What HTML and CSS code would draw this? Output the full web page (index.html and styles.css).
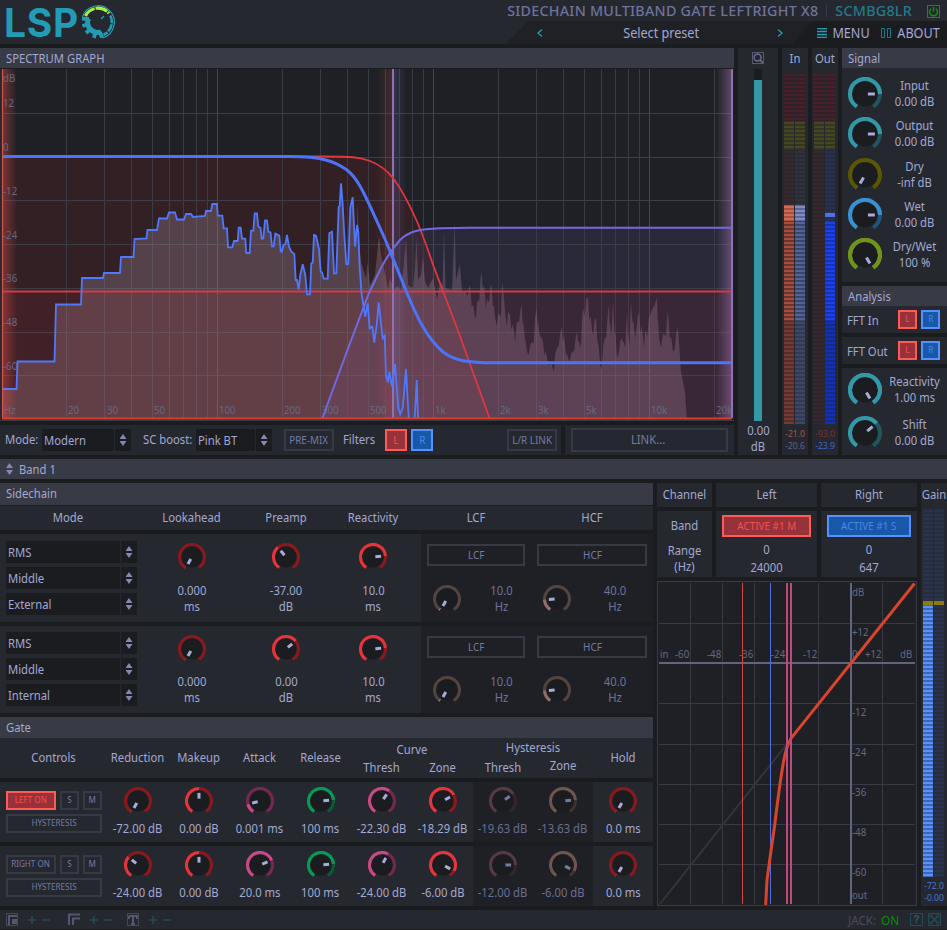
FILE: index.html
```html
<!DOCTYPE html>
<html lang="en">
<head>
<meta charset="utf-8">
<title>Sidechain Multiband Gate LeftRight x8</title>
<link rel="stylesheet" href="styles.css">
</head>
<body>
<div class="app">
<header class="top">
  <div class="logo"><span class="logo-text">LSP</span>
    <svg class="gear" width="36" height="36" viewBox="-18 -18 36 36" fill="none">
      <path d="M-15.6-5A16.4 16.4 0 1 1 5 15.8L3.5 12" stroke="#249bb5" stroke-width="1.2"/>
      <path d="M12.3-6.5A14 14 0 0 1 5.5 12.8" stroke="#249bb5" stroke-width="2.6" stroke-dasharray="8 1"/>
      <path d="M-12.5-6A14 14 0 0 1 11-8.6" stroke="#a9f03b" stroke-width="3" stroke-dasharray="12 1"/>
      <path d="M-9.5-3.5A10 10 0 0 0 3 9.8" stroke="#249bb5" stroke-width="5"/>
      <path d="M-9-3L-16-3.4M-9.5 2L-15.5 4M-7 6.5L-12 11M-2.5 9L-4 16M2 10L4 15.500" stroke="#249bb5" stroke-width="3.8"/>
      <path d="M3-3L6-6" stroke="#249bb5" stroke-width="1.4"/>
    </svg>
  </div>
  <div class="top-right">
    <div class="title-row"><span class="t title">SIDECHAIN MULTIBAND GATE LEFTRIGHT X8</span><i class="vsep"></i><span class="t code">SCMBG8LR</span>
      <svg class="power" width="13" height="13" viewBox="0 0 13 13" fill="none" stroke="#0b9408"><rect x=".5" y=".5" width="12" height="12"/><path d="M4.200 3.500a4 4 0 1 0 4.600 0M6.500 2v4.500" stroke-width="1.500"/></svg>
    </div>
    <div class="menu-row">
      <div class="preset"><svg width="6" height="10" viewBox="0 0 6 10" fill="none" stroke="#249bb5" stroke-width="1.300"><path d="M5 1.500L1 5L5 8.500"/></svg><span class="t">Select preset</span><svg width="6" height="10" viewBox="0 0 6 10" fill="none" stroke="#249bb5" stroke-width="1.300"><path d="M1 1.500L5 5L1 8.500"/></svg></div>
      <div class="menu"><svg width="10" height="10" viewBox="0 0 10 10" stroke="#249bb5"><path d="M0 .5H10M0 9.500H10M0 3.500H10M0 6.500H10" /><path d="M0 2H10M0 5H10M0 8H10" stroke="#17616f"/></svg><span class="t">MENU</span>
      <svg class="book" width="10" height="10" viewBox="0 0 10 10" stroke="#1d7a8c" fill="none"><path d="M.5 .5H3.500V9.500H.5ZM6.500 .5H9.500V9.500H6.500Z"/></svg><span class="t about">ABOUT</span></div>
    </div>
  </div>
</header>

<main class="upper">
  <section class="left">
    <div class="head"><span class="t l">SPECTRUM GRAPH</span></div>
    <svg id="spectrum" class="spectrum" width="734" height="353" viewBox="0 68 734 353"></svg>
    <div class="bars">
      <div class="bar modes"><span class="t l lab1">Mode:</span><div class="sel s1"><span class="t l">Modern</span><i></i></div>
        <span class="t l lab2">SC boost:</span><div class="sel s2"><span class="t l">Pink BT</span><i></i></div>
        <button class="btn premix"><span class="t">PRE-MIX</span></button><span class="t l lab3">Filters</span>
        <button class="btn red sq"><span class="t">L</span></button><button class="btn blue sq"><span class="t">R</span></button>
        <button class="btn lr"><span class="t">L/R LINK</span></button></div>
      <div class="bar linkbar"><button class="btn link"><span class="t">LINK...</span></button></div>
    </div>
  </section>
  <section class="panel zoomcol">
    <svg width="12" height="12" viewBox="0 0 12 12" fill="none" stroke="#6d708c"><rect x=".5" y=".5" width="11" height="11" stroke="#555870"/><circle cx="5.500" cy="5.500" r="3.500" stroke-width="1.400"/><path d="M8 8L11 11" stroke-width="1.600"/></svg>
    <div class="track"><div></div></div>
    <span class="t">0.00</span><span class="t">dB</span>
  </section>
  <section class="panel meters"><span class="t cap">In</span>
    <div class="mt"><div class="m"><b class="m-r"></b><b class="m-y"></b><b class="m-dl" style="height:55px"></b><b class="m-lt" style="height:16px"></b><b class="m-l1" style="height:100px"></b><b class="m-l2"></b></div><div class="m"><b class="m-r"></b><b class="m-y"></b><b class="m-dr" style="height:55px"></b><b class="m-rt" style="height:16px"></b><b class="m-r1" style="height:100px"></b><b class="m-r2"></b></div></div>
    <span class="t n" style="color:#a8574d">-21.0</span><span class="t n" style="color:#5b648f">-20.6</span></section>
  <section class="panel meters"><span class="t cap">Out</span>
    <div class="mt"><div class="m"><b class="m-r"></b><b class="m-y"></b><b class="m-dd"></b></div><div class="m"><b class="m-r"></b><b class="m-y"></b><b class="m-db" style="height:63px"></b><b class="m-mk"></b><b class="m-db" style="height:4px"></b><b class="m-b1" style="height:100px"></b><b class="m-b2"></b></div></div>
    <span class="t n" style="color:#7a3230">-93.0</span><span class="t n" style="color:#4166d4">-23.9</span></section>
  <section class="signal">
    <div class="head"><span class="t l">Signal</span></div>
    <div class="panel kn">
      <div class="kr"><i class="knob" data-k="17,90,#3398a8,#20575f"></i><p><span class="t">Input</span><span class="t">0.00 dB</span></p></div>
      <div class="kr"><i class="knob" data-k="17,90,#3398a8,#20575f"></i><p><span class="t">Output</span><span class="t">0.00 dB</span></p></div>
      <div class="kr"><i class="knob" data-k="17,-145,#8f8a00,#5a5700"></i><p><span class="t">Dry</span><span class="t">-inf dB</span></p></div>
      <div class="kr"><i class="knob" data-k="17,90,#3990d2,#225478"></i><p><span class="t">Wet</span><span class="t">0.00 dB</span></p></div>
      <div class="kr"><i class="knob" data-k="17,150,#6f9418,#6f9418"></i><p><span class="t">Dry/Wet</span><span class="t">100 %</span></p></div>
    </div>
    <div class="head an"><span class="t l">Analysis</span></div>
    <div class="panel fft"><span class="t l">FFT In</span><button class="btn red q"><span class="t">L</span></button><button class="btn blue q"><span class="t">R</span></button></div>
    <div class="panel fft f2"><span class="t l">FFT Out</span><button class="btn red q"><span class="t">L</span></button><button class="btn blue q"><span class="t">R</span></button></div>
    <div class="panel kn k2">
      <div class="kr"><i class="knob" data-k="17,150,#3398a8,#3398a8"></i><p><span class="t">Reactivity</span><span class="t">1.00 ms</span></p></div>
      <div class="kr"><i class="knob" data-k="17,50,#3398a8,#20575f"></i><p><span class="t">Shift</span><span class="t">0.00 dB</span></p></div>
    </div>
  </section>
</main>

<div class="band"><i class="ud"></i><span class="t l">Band 1</span></div>

<main class="lower">
  <section class="lcol">
    <div class="head h22"><span class="t l">Sidechain</span></div>
    <div class="panel sc schead"><span class="t">Mode</span><span class="t">Lookahead</span><span class="t">Preamp</span><span class="t">Reactivity</span><span class="t">LCF</span><span class="t">HCF</span></div>
    <div class="panel sc row88">
      <div class="sels"><div class="sel"><span class="t l">RMS</span><i></i></div><div class="sel"><span class="t l">Middle</span><i></i></div><div class="sel"><span class="t l">External</span><i></i></div></div>
      <div class="kv"><i class="knob" data-k="14,-145,#e2363c,#8c181c"></i><span class="t">0.000</span><span class="t">ms</span></div>
      <div class="kv"><i class="knob" data-k="14,-40,#e2363c,#8c181c"></i><span class="t">-37.00</span><span class="t">dB</span></div>
      <div class="kv re"><i class="knob" data-k="14,85,#e2363c,#8c181c"></i><span class="t">10.0</span><span class="t">ms</span></div>
      <div class="flt"><button class="btn"><span class="t">LCF</span></button><div><i class="knob" data-k="14,-142,#9c7a76,#54443f"></i><p><span class="t">10.0</span><span class="t">Hz</span></p></div></div>
      <div class="flt h"><button class="btn"><span class="t">HCF</span></button><div><i class="knob" data-k="14,-93,#8f6d6a,#54443f"></i><p><span class="t">40.0</span><span class="t">Hz</span></p></div></div>
    </div>
    <div class="panel sc row88 r2">
      <div class="sels"><div class="sel"><span class="t l">RMS</span><i></i></div><div class="sel"><span class="t l">Middle</span><i></i></div><div class="sel"><span class="t l">Internal</span><i></i></div></div>
      <div class="kv"><i class="knob" data-k="14,-145,#e2363c,#8c181c"></i><span class="t">0.000</span><span class="t">ms</span></div>
      <div class="kv"><i class="knob" data-k="14,50,#e2363c,#8c181c"></i><span class="t">0.00</span><span class="t">dB</span></div>
      <div class="kv re"><i class="knob" data-k="14,85,#e2363c,#8c181c"></i><span class="t">10.0</span><span class="t">ms</span></div>
      <div class="flt"><button class="btn"><span class="t">LCF</span></button><div><i class="knob" data-k="14,-142,#9c7a76,#54443f"></i><p><span class="t">10.0</span><span class="t">Hz</span></p></div></div>
      <div class="flt h"><button class="btn"><span class="t">HCF</span></button><div><i class="knob" data-k="14,-93,#8f6d6a,#54443f"></i><p><span class="t">40.0</span><span class="t">Hz</span></p></div></div>
    </div>
    <div class="head gatehead"><span class="t l">Gate</span></div>
    <div class="panel gt ghead"><span class="t">Controls</span><span class="t">Reduction</span><span class="t">Makeup</span><span class="t">Attack</span><span class="t">Release</span>
      <div class="two"><span class="t">Curve</span><div><span class="t">Thresh</span><span class="t">Zone</span></div></div>
      <div class="two hy"><span class="t">Hysteresis</span><div><span class="t">Thresh</span><span class="t up">Zone</span></div></div><span class="t">Hold</span></div>
    <div class="panel gt grow">
      <div class="ctl"><div><button class="btn red on"><span class="t">LEFT ON</span></button><button class="btn"><span class="t">S</span></button><button class="btn"><span class="t">M</span></button></div><button class="btn"><span class="t">HYSTERESIS</span></button></div>
      <div class="gk"><i class="knob" data-k="14,-145,#e2363c,#8c181c"></i><span class="t">-72.00 dB</span></div>
      <div class="gk"><i class="knob" data-k="14,0,#e2363c,#8c181c"></i><span class="t">0.00 dB</span></div>
      <div class="gk"><i class="knob" data-k="14,-105,#c84a84,#782850"></i><span class="t">0.001 ms</span></div>
      <div class="gk"><i class="knob" data-k="14,85,#0a9858,#075a37"></i><span class="t">100 ms</span></div>
      <div class="gk"><i class="knob" data-k="14,35,#c84a84,#782850"></i><span class="t">-22.30 dB</span></div>
      <div class="gk"><i class="knob" data-k="14,60,#e2363c,#8c181c"></i><span class="t">-18.29 dB</span></div>
      <div class="gk dim"><i class="knob" data-k="14,55,#553a44,#35252a"></i><span class="t">-19.63 dB</span></div>
      <div class="gk dim"><i class="knob" data-k="14,85,#6f5450,#40302e"></i><span class="t">-13.63 dB</span></div>
      <div class="gk"><i class="knob" data-k="14,-145,#e2363c,#8c181c"></i><span class="t">0.0 ms</span></div>
    </div>
    <div class="panel gt grow g2">
      <div class="ctl"><div><button class="btn on"><span class="t">RIGHT ON</span></button><button class="btn"><span class="t">S</span></button><button class="btn"><span class="t">M</span></button></div><button class="btn"><span class="t">HYSTERESIS</span></button></div>
      <div class="gk"><i class="knob" data-k="14,-50,#e2363c,#8c181c"></i><span class="t">-24.00 dB</span></div>
      <div class="gk"><i class="knob" data-k="14,0,#e2363c,#8c181c"></i><span class="t">0.00 dB</span></div>
      <div class="gk"><i class="knob" data-k="14,68,#c84a84,#782850"></i><span class="t">20.0 ms</span></div>
      <div class="gk"><i class="knob" data-k="14,85,#0a9858,#075a37"></i><span class="t">100 ms</span></div>
      <div class="gk"><i class="knob" data-k="14,28,#c84a84,#782850"></i><span class="t">-24.00 dB</span></div>
      <div class="gk"><i class="knob" data-k="14,118,#e2363c,#8c181c"></i><span class="t">-6.00 dB</span></div>
      <div class="gk dim"><i class="knob" data-k="14,90,#553a44,#35252a"></i><span class="t">-12.00 dB</span></div>
      <div class="gk dim"><i class="knob" data-k="14,118,#6f5450,#40302e"></i><span class="t">-6.00 dB</span></div>
      <div class="gk"><i class="knob" data-k="14,-145,#e2363c,#8c181c"></i><span class="t">0.0 ms</span></div>
    </div>
  </section>
  <section class="mcol">
    <div class="ch"><div class="panel"><span class="t">Channel</span></div><div class="panel"><span class="t">Left</span></div><div class="panel"><span class="t">Right</span></div></div>
    <div class="ch c2"><div class="panel bandcell"><span class="t">Band</span><span class="t">Range</span><span class="t">(Hz)</span></div>
      <div class="panel act"><button class="btn red"><span class="t">ACTIVE #1 M</span></button><span class="t">0</span><span class="t">24000</span></div>
      <div class="panel act"><button class="btn blue"><span class="t">ACTIVE #1 S</span></button><span class="t">0</span><span class="t">647</span></div></div>
    <svg id="curve" width="260" height="325" viewBox="657 581 260 325"></svg>
  </section>
  <section class="panel gain"><span class="t cap">Gain</span>
    <div class="mt"><div class="m"><b class="m-dg" style="height:92px"></b><b class="m-gold"></b><b class="m-g1"></b></div><div class="m"><b class="m-dg" style="height:92px"></b><b class="m-gold"></b><b class="m-dg fill"></b></div></div>
    <span class="t n">-72.0</span><span class="t n">-0.00</span></section>
</main>

<footer class="foot">
  <svg width="180" height="14" viewBox="0 0 180 14" fill="none">
    <g stroke="#454759"><rect x="6.500" y=".5" width="11" height="12"/><rect x="127.500" y=".5" width="11" height="12"/></g>
    <g stroke="#555770" stroke-width="2"><path d="M9 12V3H17"/><path d="M69 12V1.500H80"/><path d="M73 12V5.500H80"/></g>
    <rect x="12" y="6" width="5" height="5" fill="#555770"/>
    <path d="M129 3H137V6M129 3V6M133 3V11M131 11H135" stroke="#555770" stroke-width="2"/>
    <path d="M28 7H36M32 3V11M42 7H50M90 7H98M94 3V11M104 7H112M149 7H157M153 3V11M163 7H171" stroke="#234a55" stroke-width="1.600"/>
  </svg>
  <span class="t l jack">JACK:</span><span class="t l onn">ON</span>
  <span class="q">?</span>
  <svg width="13" height="13" viewBox="0 0 13 13" fill="none" stroke="#234a55"><rect x=".5" y=".5" width="12" height="12"/><path d="M3 3L10 10M10 3L3 10" stroke-width="1.600"/><path d="M2 5V2H5M8 2H11V5M11 8V11H8M5 11H2V8"/></svg>
</footer>
</div>
<script src="app.js"></script>
</body>
</html>
```
FILE: styles.css
```css
* { box-sizing: border-box; }
body { margin: 0; background: #1b1c20; overflow: hidden; }
.app { width: 947px; height: 930px; overflow: hidden; background: #1b1c20; color: #a4a8d2; font: 12.5px/16px "Noto Sans", "Open Sans", sans-serif; }
p { margin: 0; }
svg { display: block; flex: none; }
.t { display: block; white-space: nowrap; transform: scaleX(.9); transform-origin: center; text-align: center; }
.t.l { transform-origin: left; text-align: left; }
.panel { background: #25282f; }
.head { height: 20px; background: #383a45; padding: 3px 6px 0; line-height: 15px; }
.btn { all: unset; box-sizing: border-box; display: flex; justify-content: center; align-items: center; border: 2px solid #373a45; color: #767aa5; font-size: 11px; line-height: 14px; }
.btn.red { background: #98323a; border-color: #ff5a55; color: #f2504d; }
.btn.blue { background: #1758a8; border-color: #5590fb; color: #4a86ee; }

.top { height: 44px; background: #25282f; display: flex; justify-content: space-between; }
.logo { display: flex; padding-left: 4px; }
.logo-text { font: 700 39px/45px Inter, sans-serif; letter-spacing: .7px; color: #249bb5; width: 76px; }
.gear { margin-top: 4px; }
.top-right { width: 441px; }
.title-row { height: 21px; display: flex; align-items: center; justify-content: flex-end; font-size: 14.300px; font-weight: 500; color: #6f7399; padding-right: 7px; }
.title-row .t { transform: none; letter-spacing: .25px; }
.title-row .code { color: #247a8b; }
.vsep { width: 1px; height: 12px; background: #3a3c48; margin: 0 8px; }
.power { margin-left: 15px; margin-top: 1px; }
.menu-row { height: 23px; background: #1b1c20; clip-path: polygon(23px 0, 100% 0, 100% 100%, 0 100%); display: flex; font-size: 14px; }
.preset { width: 307px; background: #202127; clip-path: polygon(0 0, 100% 0, 286px 100%, 0 100%); display: flex; align-items: center; justify-content: space-between; padding: 0 30px 0 31px; }
.preset svg:first-child { margin-right: 2px; }
.menu { display: flex; align-items: center; padding-left: 4px; }
.menu .t { width: 48px; }
.menu .about { width: 49px; margin-left: 3px; }
.menu .book { margin-left: 6px; }

.upper { margin-top: 4px; height: 407px; display: flex; gap: 4px; }
.left { width: 734px; }
.spectrum { background: #1f2025; }
.bars { margin-top: 4px; display: flex; gap: 4px; }
.bar { height: 30px; background: #25282f; display: flex; align-items: center; }
.modes { width: 561px; padding-left: 5px; }
.linkbar { width: 169px; padding: 0 6px; }
.linkbar .btn { width: 157px; height: 24px; font-size: 12.500px; padding-right: 2px; }
.lab1 { width: 37px; } .lab2 { width: 53px; } .lab3 { width: 42px; }
.sel { height: 22px; background: #1b1c20; display: flex; justify-content: space-between; padding-left: 2px; line-height: 23px; }
.sel i { width: 17px; border-left: 1px solid #25282f; display: flex; flex-direction: column; align-items: center; justify-content: center; gap: 2px; }
.sel i::before, .sel i::after, .ud::before, .ud::after { content: ""; width: 7px; height: 5px; background: #8488b4; clip-path: polygon(50% 0, 100% 100%, 0 100%); }
.sel i::after, .ud::after { clip-path: polygon(0 0, 100% 0, 50% 100%); }
.s1 { width: 89px; margin-right: 12px; }
.s2 { width: 76px; margin-right: 12px; }
.premix { width: 50px; height: 22px; margin-right: 9px; }
.sq { width: 22px; height: 22px; margin-right: 4px; }
.lr { width: 50px; height: 22px; margin-left: 70px; }

.zoomcol { width: 40px; display: flex; flex-direction: column; align-items: center; padding-top: 4px; }
.track { width: 8px; height: 352px; margin: 5px 0 2px; background: #1b1c20; padding-top: 11px; }
.track div { height: 341px; background: #3398a8; }
.meters { width: 26px; padding-top: 3px; }
.meters .cap { margin-bottom: 6px; line-height: 16px; }
.mt { display: flex; gap: 1px; margin: 0 2px; height: 351px; }
.m { width: 10px; display: flex; flex-direction: column; }
.m b { display: block; flex: none; --a: #333; --b: #222; background: repeating-linear-gradient(var(--b) 0 1px, var(--a) 1px 3px, var(--b) 3px 4px); }
.n { font-size: 9.500px; line-height: 12px; }
.mt + .n { margin-top: 4px; }
.m .m-r { height: 48px; --a: #47202a; --b: #331f27; }
.m .m-y { height: 29px; --a: #464620; --b: #343523; }
.m .m-dl { --a: #38292d; --b: #2b272d; }
.m .m-dr { --a: #2f313c; --b: #292c35; }
.m .m-lt { --a: #cf6b58; --b: #a8503f; }
.m .m-rt { --a: #7f8bbd; --b: #5a679f; }
.m .m-l1 { --a: #a54e3d; --b: #6a3430; }
.m .m-r1 { --a: #56629a; --b: #3c4567; }
.m .m-l2 { flex: 1; --a: #783a30; --b: #542d2c; }
.m .m-r2 { flex: 1; --a: #3f4769; --b: #333a50; }
.m .m-dd { flex: 1; --a: #38272c; --b: #2b252b; }
.m .m-db { --a: #283151; --b: #262c40; }
.m .m-mk { height: 4px; background: #4f70e6; }
.m .m-b1 { --a: #1a40f2; --b: #1731b4; }
.m .m-b2 { flex: 1; --a: #1230b8; --b: #152a84; }
.m .m-dg { --a: #2a334d; --b: #262d3d; }
.m .m-dg.fill { flex: 1; }
.m .m-gold { height: 4px; background: #917b08; }
.m .m-g1 { flex: 1; --a: #5b91fa; --b: #3c66b8; }

.signal { width: 105px; }
.kn { height: 214px; padding: 6px 0 0 6px; }
.kr { display: flex; height: 40.300px; align-items: center; }
.kr p { width: 68px; padding-top: 0; }
.knob { display: block; flex: none; }
.an { margin-top: 4px; }
.fft { height: 27px; display: flex; align-items: flex-start; padding: 4px 0 0 5px; gap: 4px; }
.fft .t.l { width: 47px; line-height: 22px; }
.fft .q { width: 19px; height: 19px; font-size: 9px; align-items: flex-start; line-height: 13px; }
.f2 { margin-top: 4px; }
.k2 { height: 87px; margin-top: 4px; padding-top: 1px; }
.k2 .kr { height: 42.500px; }

.band { margin-top: 4px; height: 20px; background: #383a45; display: flex; align-items: center; padding-left: 6px; gap: 6px; }
.band .t { padding-top: 1px; }
.ud { display: flex; flex-direction: column; gap: 2px; }

.lower { margin-top: 4px; height: 423px; display: flex; gap: 4px; }
.lcol { width: 653px; }
.h22 { height: 22px; }
.sc { display: grid; grid-template-columns: 144px 95px 94px 88px 110px 122px; }
.schead { height: 24px; margin-top: 1px; line-height: 23px; }
.schead .t:first-child { margin-right: 8px; }
.schead .t:nth-child(4) { margin-right: 8px; }
.row88 { height: 88px; margin-top: 4px; }
.sels { padding: 7px 7px 0 6px; display: flex; flex-direction: column; gap: 4px; }
.r2 { height: 87px; }
.r2 .sels { padding-top: 6px; }
.kv { display: flex; flex-direction: column; align-items: center; padding-top: 9px; }
.kv.re { padding-right: 8px; }
.kv .knob { margin-bottom: 12px; }
.r2 .kv .knob { margin-bottom: 11px; }
.flt { background: #1e2026; color: #6f7399; padding: 10px 6px 0; }
.flt .btn { height: 22px; margin-bottom: 17px; width: 98px; }
.flt.h .btn { width: 110px; }
.flt div { display: flex; padding-left: 6px; }
.flt .knob { margin-top: 2px; }
.r2 .flt .btn { margin-bottom: 16px; }
.flt p { flex: 1; padding-left: 17px; }
.flt.h p { padding-left: 12px; }
.gatehead { margin-top: 4px; height: 21px; }
.gt { display: grid; grid-template-columns: 107px repeat(6, 61px) repeat(3, 60px); }
.ghead { height: 40px; line-height: 39px; }
.two { grid-column: span 2; line-height: 18px; padding-top: 3px; }
.two div { display: grid; grid-template-columns: 1fr 1fr; }
.two.hy { padding-top: 1px; }
.two.hy div .t:first-child { margin-top: 2px; }
.grow { height: 60px; margin-top: 4px; }
.gk { display: flex; flex-direction: column; align-items: center; padding-top: 5px; }
.gk .knob { margin-bottom: 6px; }
.gk.dim { background: #1e2026; color: #6a6e92; }
.ctl { padding: 9px 5px 0 6px; }
.ctl div { display: flex; gap: 4px; margin-bottom: 4px; }
.ctl .btn { height: 19px; width: 19px; font-size: 9px; line-height: 12px; padding-bottom: 2px; }
.ctl .on { width: 50px; }
.ctl > .btn { width: 96px; }

.mcol { width: 260px; }
.ch { display: grid; grid-template-columns: 55px 101px 96px; gap: 4px; height: 24px; line-height: 24px; }
.c2 { height: 66px; margin: 4px 0; line-height: 18px; }
.act { display: flex; flex-direction: column; }
.act .btn { height: 22px; margin: 4px 6px 4px; }
.c2 .bandcell { padding-top: 7px; line-height: 16px; }
.bandcell .t:first-child { margin-bottom: 9px; }
.gain { width: 26px; padding-top: 3px; }
.gain .cap { line-height: 17px; margin: 0 -3px 6px; }
.gain .mt { height: 368px; }
.gain .n { color: #4c74d2; }
.gain .mt + .n { margin-top: 3px; }

.foot { margin-top: 4px; height: 19px; background: #25282f; display: flex; align-items: center; color: #484a5e; }
.foot .jack { margin-left: 668px; width: 33px; font-size: 13px; }
.onn { color: #0b8c08; width: 29px; font-size: 13px; }
.foot .q { width: 13px; height: 13px; border: 1px solid #234a55; color: #2a5f6c; font: bold 10px/11px "Liberation Sans", sans-serif; text-align: center; margin-right: 5px; }

.gl { font-size: 11px; fill: #666980; }
```
FILE: app.js
```js
function polar(r, deg) {
  const a = deg * Math.PI / 180;
  return (r * Math.sin(a)).toFixed(2) + ' ' + (-r * Math.cos(a)).toFixed(2);
}
function arc(r, from, to) {
  return `M${polar(r, from)}A${r} ${r} 0 ${to - from > 180 ? 1 : 0} 1 ${polar(r, to)}`;
}
document.querySelectorAll('.knob').forEach(el => {
  const [rs, vs, on, off] = el.dataset.k.split(',');
  const R = +rs, v = +vs, w = R > 15 ? 4 : 3, r = R - w / 2;
  const p = v < -140 ? -150 : v;
  const dim = el.closest('.dim') ? '#767aa0' : '#a9acd8';
  el.innerHTML = `<svg width="${2 * R}" height="${2 * R}" viewBox="${-R} ${-R} ${2 * R} ${2 * R}" fill="none">
    <circle r="${R - w - .5}" fill="#1b1c20"/>
    <path d="${arc(r, -147, 147)}" stroke="${off}" stroke-width="${w}"/>
    <path d="${arc(r, -147, Math.min(v, 147))}" stroke="${on}" stroke-width="${w}"/>
    <path d="M${polar(R * .17, p)}L${polar(R * .58, p)}" stroke="${dim}" stroke-width="3"/></svg>`;
});

const line = (x1, y1, x2, y2, c, w = 1) => `<path d="M${x1} ${y1}L${x2} ${y2}" stroke="${c}" stroke-width="${w}"/>`;
const txt = (x, y, s) => `<text class="gl" transform="translate(${x} ${y}) scale(.88 1)">${s}</text>`;

const wave = '2,389 16.5,389 17.5,361.5 54.5,361.5 56,304.5 81,304.5 82,278 103,278 104,273 120,273 121,257 133.5,257 134.5,239 146.5,238.5 147.5,230 157,230 159,218.5 167,218.5 169,212.5 175,212.5 177,219.5 184,219.5 186,214 191,214 193,217 205,216 206,211 211,211 212.3,204 217,204 217.7,215.7 222.3,215.7 223.7,228.3 227,228.3 228,247.3 232.3,247.3 234,241 237.7,241 238.7,227.7 240.7,227.7 242,238.7 245.3,238.7 246.3,253 249.7,253 251,230.7 253.3,230.7 254.7,213.3 257,213.3 258.3,226.3 260.5,228 261.7,238.7 263.3,238.7 265,220.3 267,220.3 268.3,231.7 270.5,232.5 272,246.3 273.7,246.3 275.3,233.7 279.3,235.7 280.7,251.7 282,251.7 283.3,245 285.3,244.3 287,235 289,246.7 291.3,251.7 294.3,254 295.7,280 297,280 298.7,289.7 300.3,275 302.7,264.3 305.3,275 307,294.3 310,294.3 311.3,263.3 312.7,262.7 314,235 316,235.7 319,249 320.7,271.7 322,272.3 323.7,278.7 327.7,278.7 329.3,233.3 332,231.7 334,273.3 336.3,273.3 338.7,206.7 339.7,206 341,183.3 342.7,205 344.3,235 346.3,264 348.3,264 350.3,207.3 352.7,197.3 355,246.7 357,225';
const tail = ' 358.3,231.7 359.7,268.3 361.7,295 365.3,316.7 367.7,303.3 369.7,328.3 372.3,326.7 374.3,342.7 376.7,325 378.7,302.3 382.7,338.3 384.7,335.7 386,375 388,382.3 389.3,371.7 392,386.7 395,364 398.3,408.3 400.3,414 402.7,408.3 406,369 408.7,418';
const env = ' 357.5,203 359,240 361,262 366,278 367.5,262 370,285 375,275 377,255 379,235 381,255 386,278 388,290 390,278 394,290 397,286 401,290 403.5,268 406,238 408,285 413,288 415,268 416.500,237 418,280 421,275 423,256 425,282 428,288 433,278 437,300 440,282 442.500,285 444,230 445.500,288 452,290 454.700,222 456,280 460,264 462,292 467,295 470,285 475,318 478,300 481.7,272 485,295 488,302 491.7,285 495,317 500,315 502.7,282 505,312 510,315 514,332 518,322 521.7,305 524,330 527,352 532,342 536.7,308 539,332 543,342 547,358 552,365 557,348 562,327 565,345 568,358 573,352 577,332 580,348 583,308 588,297 592,330 596,318 600,365 605,338 609,305 611,338 613,302 617,358 622,338 625,348 627,312 629,345 631,302 635,338 639,312 643,338 646,332 650,315 653,308 657,298 659,338 665,335 668,312 673,352 678,328 681,372 685,392 686.7,418';
// densify the envelope with narrow spikes between the measured peaks
const pts = env.trim().split(' ').map(p => p.split(',').map(Number));
let seed = 7, fuzzy = '';
const rnd = () => (seed = (seed * 16807) % 2147483647) / 2147483647;
pts.forEach((p, i) => {
  fuzzy += ` ${p[0]},${p[1]}`;
  const q = pts[i + 1];
  if (q && p[0] > 460 && p[0] < 678) for (let k = 1; k < 3; k++) {
    const f = k / 3;
    fuzzy += ` ${(p[0] + (q[0] - p[0]) * f).toFixed(1)},${(p[1] + (q[1] - p[1]) * f + (k === 1 ? 14 : -4) * rnd()).toFixed(1)}`;
  }
});
let s = `<defs>
<linearGradient id="gl"><stop offset="0" stop-color="#e0504c" stop-opacity=".45"/><stop offset="1" stop-color="#e0504c" stop-opacity="0"/></linearGradient>
<linearGradient id="gr"><stop offset="0" stop-color="#e0504c" stop-opacity="0"/><stop offset="1" stop-color="#e0504c" stop-opacity=".2"/></linearGradient>
<linearGradient id="gb"><stop offset="0" stop-color="#8c8cff" stop-opacity=".18"/><stop offset="1" stop-color="#8c8cff" stop-opacity="0"/></linearGradient>
<linearGradient id="gp"><stop offset="0" stop-color="#b07ac0" stop-opacity="0"/><stop offset="1" stop-color="#b07ac0" stop-opacity=".45"/></linearGradient>
<clipPath id="cp"><rect x="2" y="69" width="731" height="350"/></clipPath></defs><g clip-path="url(#cp)" fill="none">`;
const redC = 'M2 156.500H325C350 156.500 360 157 370 161C379 164.500 386 169 393 178C403 191 410 206 415 217C422 232 428 250 433.500 266L457 328L489.500 418';
const purC = 'M322.500 418L346.700 352L369 293L380 270C386 258 392 249 400 240C409 231 420 229 440 228.200L470 227.700H732';
const blueC = 'M2 156.500H290C320 156.500 334 160.500 347 170C357 178 363 191 370 206L385 239L407 293C418 320 428 339 443 352C455 361 467 362.500 495 362.800H732';
s += `<path d="${redC}H2Z" fill="#dd2828" fill-opacity=".1"/><path d="${purC}V418Z" fill="#786edc" fill-opacity=".11"/>`;
[66, 104, 131, 152, 169, 183, 196, 207, 217, 282, 320, 347, 368, 385, 399, 412, 423, 433, 498, 536, 563, 584, 601, 615, 628, 639, 649, 714].forEach(x => s += line(x + .5, 69, x + .5, 418, x === 217 || x === 433 || x === 649 ? '#464852' : '#3a3c45'));
[113, 157, 200, 244, 288, 332, 375].forEach(y => s += line(2, y + .5, 732, y + .5, '#3c3e47'));
s += `<polygon points="${wave}${fuzzy} 2,418" fill="#aa8fa0" fill-opacity=".3"/>`;
s += `<rect x="2" y="292" width="730" height="126" fill="#dc2838" fill-opacity=".1"/>`;
s += `<rect x="2" y="69" width="15" height="349" fill="url(#gl)"/><rect x="377" y="69" width="16" height="349" fill="url(#gr)"/><rect x="393" y="69" width="14" height="349" fill="url(#gb)"/><rect x="716" y="69" width="16" height="349" fill="url(#gp)"/>`;
[['dB', 82], ['12', 107], ['0', 151], ['-12', 195], ['-24', 239], ['-36', 282], ['-48', 326], ['-60', 370]].forEach(a => s += txt(3, a[1], a[0]));
[[4, 'Hz'], [68, '20'], [107, '30'], [154, '50'], [219, '100'], [284, '200'], [322, '300'], [370, '500'], [435, '1k'], [500, '2k'], [538, '3k'], [586, '5k'], [651, '10k'], [716, '20k']].forEach(a => s += txt(a[0], 414, a[1]));
s += line(2, 291.5, 732, 291.5, '#d23a48', 2) + line(393, 69, 393, 418, '#9070ad', 2);
s += `<path d="${redC}" stroke="#e2363f" stroke-width="1.800"/><path d="${purC}" stroke="#7268e0" stroke-width="2"/>`;
s += `<polyline points="${wave}${tail}" stroke="#4f78ff" stroke-width="1.800"/><path d="M414.700 418L416.700 380L418 418" stroke="#4f78ff" stroke-width="1.800"/>`;
s += `<path d="${blueC}" stroke="#4d73f8" stroke-width="3"/></g>`;
s += line(2.5, 69, 2.5, 418, '#d9584f', 1) + line(732, 69, 732, 418, '#9070b4', 2) + line(2, 418.500, 732, 418.500, '#d8402c', 2) + line(0, 420.500, 734, 420.500, '#373a45') + line(1, 69, 1, 420, '#33353f') + line(0, 68.500, 734, 68.500, '#1b1c20');
document.getElementById('spectrum').innerHTML = s;

let c = `<rect x="657.500" y="581.500" width="259" height="324" fill="#1f2025" stroke="#373943"/><g fill="none">`;
[690, 722, 754, 786, 818, 882].forEach(x => c += line(x + .5, 583, x + .5, 904, '#383a43'));
[623, 703, 744, 784, 824, 864].forEach(y => c += line(659, y + .5, 915, y + .5, '#383a43'));
c += line(851, 583, 851, 904, '#62647e', 2) + line(659, 663, 915, 663, '#62647e', 2) + line(660, 904, 787, 744, '#34353b', 2);
[[660, 'in'], [675, '-60'], [707, '-48'], [739, '-36'], [771, '-24'], [803, '-12'], [852, '0'], [865, '+12'], [900, 'dB']].forEach(a => c += txt(a[0], 658, a[1]));
[[596, 'dB'], [636, '+12'], [716, '-12'], [756, '-24'], [796, '-36'], [836, '-48'], [876, '-60'], [899, 'out']].forEach(a => c += txt(852, a[0], a[1]));
c += line(742.5, 583, 742.5, 904, '#d0483c') + line(770.5, 583, 770.5, 904, '#4f6fe0');
c += `<path d="M914.500 583.500L791 738.300C787 744 785 753 783.300 763C780 782 777 806 775 823L770.700 853L767 880L765.700 905" stroke="#d8442c" stroke-width="3"/>`;
c += line(787, 583, 787, 904, '#bc4a7c', 2) + line(791, 583, 791, 904, '#bc4a7c', 2) + '</g>';
document.getElementById('curve').innerHTML = c;
```
